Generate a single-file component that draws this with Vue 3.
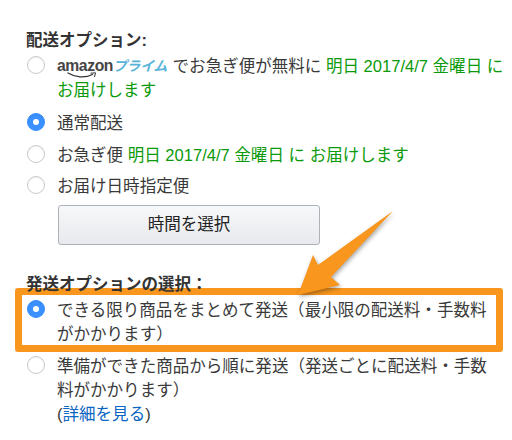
<script setup>
</script>

<template>
  <main class="page">
    <h2 class="title">配送オプション:</h2>
    <div class="row first">
      <span class="radio"></span>
      <p class="text">
        <span class="logo">
          <span class="amz">amazon</span><span class="prime">プライム</span>
          <svg class="smile" viewBox="0 0 30 8" width="30" height="8">
            <path d="M0.5 0.8C8 5.5 18 6.5 26 2.2" fill="none" stroke="#333" stroke-width="1.3"/>
            <path d="M23.5 1.2L28.5 0.8L27.5 5" fill="none" stroke="#333" stroke-width="1"/>
          </svg>
        </span>
        でお急ぎ便が無料に <span class="green">明日 2017/4/7 金曜日 に<br>お届けします</span>
      </p>
    </div>
    <div class="row r2">
      <span class="radio on"></span>
      <p class="text">通常配送</p>
    </div>
    <div class="row r3">
      <span class="radio"></span>
      <p class="text">お急ぎ便 <span class="green">明日 2017/4/7 金曜日 に お届けします</span></p>
    </div>
    <div class="row r4">
      <span class="radio"></span>
      <p class="text">お届け日時指定便</p>
    </div>
    <button class="btn">時間を選択</button>
    <h2 class="title t2">発送オプションの選択：</h2>
    <div class="frame">
      <div class="row">
        <span class="radio on"></span>
        <p class="text">できる限り商品をまとめて発送（最小限の配送料・手数料<br>がかかります）</p>
      </div>
    </div>
    <div class="row r6">
      <span class="radio"></span>
      <p class="text">準備ができた商品から順に発送（発送ごとに配送料・手数<br>料がかかります）<br>(<a class="link">詳細を見る</a>)</p>
    </div>
    <svg class="arrow" viewBox="0 0 512 440" width="512" height="440">
      <polygon points="298,295 313,255 318,265 393,211 331,277 340,285" fill="#f8961e"/>
    </svg>
  </main>
</template>

<style>
html, body { margin: 0; background: #fff; }
</style>

<style scoped>
.page {
  position: relative;
  width: 512px;
  height: 440px;
  overflow: hidden;
  box-sizing: border-box;
  padding-top: 28px;
  font-family: "Liberation Sans", "Noto Sans CJK JP", sans-serif;
  font-size: 16.55px;
  line-height: 24px;
  color: #3a3a3a;
}
.title {
  margin: 0 0 0 26px;
  font-size: 16.5px;
  font-weight: 700;
  line-height: 24px;
  color: #333;
}
.t2 { margin-top: 27px; }
.row { display: flex; align-items: flex-start; padding-left: 27px; }
.first { margin-top: 3px; }
.r2 { margin-top: 9px; }
.r3 { margin-top: 8px; }
.r4 { margin-top: 7px; }
.r6 { margin-top: 3px; }
.radio {
  flex: none;
  box-sizing: border-box;
  width: 18px;
  height: 18px;
  margin-top: 1px;
  border: 1px solid #c9c9c9;
  border-radius: 50%;
  background: #fff;
  box-shadow: inset 0 1px 1px rgba(0,0,0,.06);
  position: relative;
}
.radio.on {
  background: #3b90ff;
  border-color: #3b90ff;
}
.radio.on::after {
  content: "";
  position: absolute;
  left: 5px;
  top: 5px;
  width: 6px;
  height: 6px;
  border-radius: 50%;
  background: #fff;
}
.text { margin: 0 0 0 12px; white-space: nowrap; }
.green { color: #0b9a0b; }
.logo { position: relative; display: inline-block; width: 111px; height: 24px; vertical-align: top; line-height: 22px; }
.amz { font-size: 15.7px; font-weight: 700; color: #444; letter-spacing: -0.4px; }
.prime { font-size: 13.8px; font-weight: 700; font-style: italic; color: #58b4d8; letter-spacing: -0.2px; }
.smile { position: absolute; left: 10px; top: 17px; }
.btn {
  display: block;
  box-sizing: border-box;
  width: 262px;
  height: 40px;
  margin: 6px 0 0 58px;
  padding: 0;
  border: 1px solid #adb1b8;
  border-radius: 3px;
  background: linear-gradient(#f7f8fa, #e7e9ec);
  font: inherit;
  color: #222;
}
.frame {
  box-sizing: border-box;
  width: 488px;
  height: 64px;
  margin: -8px 0 0 15px;
  border: 7px solid #f8961e;
  border-radius: 3px;
  background: #fff;
  padding-top: 4px;
}
.frame .row { padding-left: 5px; }
.link { color: #0a66c2; }
.arrow {
  position: absolute;
  left: 0;
  top: 0;
  pointer-events: none;
  filter: drop-shadow(1px 2px 2px rgba(0,0,0,.35));
}
</style>
